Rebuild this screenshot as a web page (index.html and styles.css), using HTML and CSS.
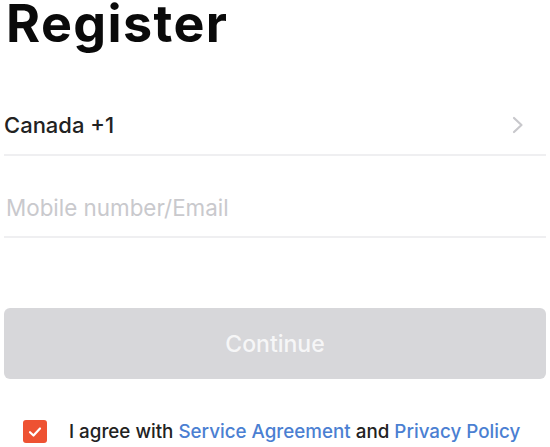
FILE: index.html
```html
<!DOCTYPE html>
<html lang="en">
<head>
<meta charset="utf-8">
<title>Register</title>
<link rel="stylesheet" href="styles.css">
</head>
<body>
<main class="page">
  <h1 class="title">Register</h1>
  <div class="field field-country">
    <span class="country">Canada +1</span>
    <svg class="chevron" width="12" height="18" viewBox="0 0 12 18" aria-hidden="true">
      <path d="M2 2 L9.5 9 L2 16" fill="none" stroke="#c8c8cc" stroke-width="2.2" stroke-linecap="round" stroke-linejoin="round"/>
    </svg>
  </div>
  <div class="field field-account">
    <span class="placeholder">Mobile number/Email</span>
  </div>
  <button class="continue" type="button">Continue</button>
  <div class="agree">
    <span class="checkbox">
      <svg width="14" height="12" viewBox="0 0 14 12" aria-hidden="true">
        <path d="M2 6.2 L5.5 9.5 L12 2.5" fill="none" stroke="#ffffff" stroke-width="2.2" stroke-linecap="round" stroke-linejoin="round"/>
      </svg>
    </span>
    <span class="agree-text">I agree with <a class="link">Service Agreement</a> and <a class="link">Privacy Policy</a></span>
  </div>
</main>
</body>
</html>
```

FILE: styles.css
```css
* { box-sizing: border-box; }
html, body { margin: 0; padding: 0; background: #ffffff; }
body { font-family: Inter, "Noto Sans", "Liberation Sans", sans-serif; color: #111111; }
.page { width: 550px; height: 447px; padding: 0 4px; overflow: hidden; }
.title {
  margin: -6px 0 0;
  padding-left: 2px;
  font-size: 52px;
  line-height: 60px;
  font-weight: 700;
  letter-spacing: 1.4px;
  color: #0a0a0a;
}
.field {
  display: flex;
  align-items: center;
  justify-content: space-between;
  height: 82px;
  border-bottom: 2px solid #efeff1;
}
.field-country { margin-top: 20px; padding-top: 22px; }
.country { font-size: 22px; font-weight: 500; color: #222222; }
.chevron { margin-right: 22px; }
.field-account { padding-top: 22px; padding-left: 2px; }
.placeholder { font-size: 22.4px; color: #c9c9cd; }
.continue {
  display: block;
  width: 542px;
  height: 71px;
  margin-top: 70px;
  border: none;
  border-radius: 6px;
  background: #d7d7da;
  color: #f6f6f7;
  font-family: inherit;
  font-size: 23px;
  font-weight: 500;
}
.agree {
  display: flex;
  align-items: center;
  gap: 22px;
  margin-top: 41px;
  padding-left: 19px;
}
.checkbox {
  display: flex;
  align-items: center;
  justify-content: center;
  width: 24px;
  height: 23px;
  border-radius: 3px;
  background: #ee5232;
}
.agree-text { font-size: 18.8px; font-weight: 500; color: #222222; }
.link { color: #4b7fd2; }
```
